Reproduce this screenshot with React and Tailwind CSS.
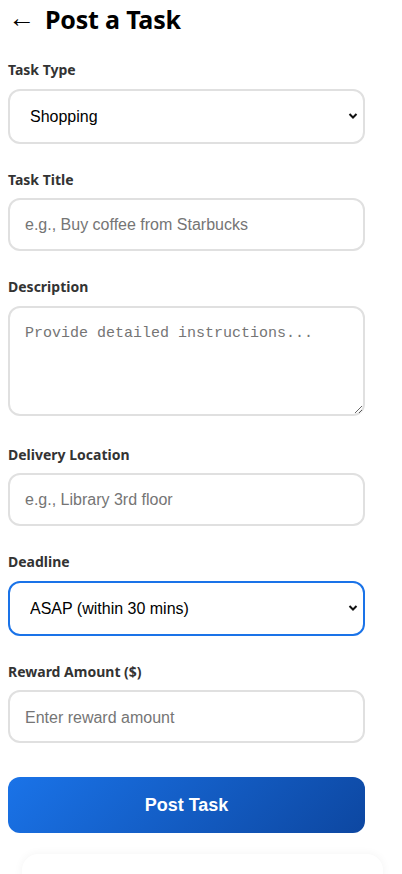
import React, { useState } from "react";

const labelCls =
  "block text-[14px] leading-[21px] font-bold text-[#333] mb-[8.5px] font-['Noto_Sans',sans-serif]";
const baseField =
  "block w-[357px] h-[53px] rounded-[12px] border-2 bg-white px-[15px] text-[16px] text-black font-['Liberation_Sans',Arial,sans-serif] placeholder:text-[#757575] outline-none";
const fieldCls = `${baseField} border-[#e0e0e0]`;

const Chevron = () => (
  <svg
    className="pointer-events-none absolute right-[7px] top-1/2 -translate-y-1/2"
    width="10"
    height="7"
    viewBox="0 0 10 7"
    fill="none"
  >
    <path d="M1.5 1.5 L5 5 L8.5 1.5" stroke="#111" strokeWidth="2" />
  </svg>
);

const SelectField = ({ value, onChange, options, active }) => (
  <div className="relative w-[357px]">
    <select
      value={value}
      onChange={(e) => onChange(e.target.value)}
      className={`${baseField} h-[55px] appearance-none pl-[20px] pt-[2px] ${
        active ? "border-[#1a73e8]" : "border-[#e0e0e0]"
      }`}
    >
      {options.map((o) => (
        <option key={o}>{o}</option>
      ))}
    </select>
    <Chevron />
  </div>
);

export default function App() {
  const [taskType, setTaskType] = useState("Shopping");
  const [deadline, setDeadline] = useState("ASAP (within 30 mins)");

  return (
    <div className="h-[874px] bg-white px-2 pt-[3px] overflow-hidden">
      <div className="flex items-center h-[34px] mb-[22px] font-['Noto_Sans',sans-serif]">
        <button className="text-[27px] leading-none text-black w-[22px] -mt-[3px] font-['Liberation_Sans',Arial,sans-serif]">
          ←
        </button>
        <h1 className="ml-[15px] text-[25px] font-bold text-black tracking-[-0.2px]">
          Post a Task
        </h1>
      </div>

      <div className="mb-[25px]">
        <label className={labelCls}>Task Type</label>
        <SelectField
          value={taskType}
          onChange={setTaskType}
          options={["Shopping", "Food Delivery", "Printing", "Other"]}
        />
      </div>

      <div className="mb-[25px]">
        <label className={labelCls}>Task Title</label>
        <input className={fieldCls} placeholder="e.g., Buy coffee from Starbucks" />
      </div>

      <div className="mb-[28px]">
        <label className={labelCls}>Description</label>
        <textarea
          className="block w-[357px] h-[110px] rounded-[12px] border-2 border-[#e0e0e0] bg-white px-[15px] pt-[17px] pb-[13px] text-[15px] leading-[18px] font-['Liberation_Mono',monospace] placeholder:text-[#757575] outline-none resize-y"
          placeholder="Provide detailed instructions..."
        />
      </div>

      <div className="mb-[25px]">
        <label className={labelCls}>Delivery Location</label>
        <input className={fieldCls} placeholder="e.g., Library 3rd floor" />
      </div>

      <div className="mb-[25px]">
        <label className={labelCls}>Deadline</label>
        <SelectField
          value={deadline}
          onChange={setDeadline}
          options={["ASAP (within 30 mins)", "Within 1 hour", "Within 2 hours", "Today"]}
          active
        />
      </div>

      <div className="mb-[34px]">
        <label className={labelCls}>Reward Amount ($)</label>
        <input className={`${fieldCls} pt-[2px]`} type="number" placeholder="Enter reward amount" />
      </div>

      <button className="block w-[357px] h-[56px] rounded-[12px] bg-[linear-gradient(135deg,#1a73e8,#0d47a1)] text-white text-[18px] font-bold font-['Liberation_Sans',Arial,sans-serif]">
        Post Task
      </button>

      <div className="ml-[14px] mt-[21px] w-[361px] h-[120px] rounded-[16px] bg-white shadow-[0_0_10px_rgba(0,0,0,0.05)]" />
    </div>
  );
}
